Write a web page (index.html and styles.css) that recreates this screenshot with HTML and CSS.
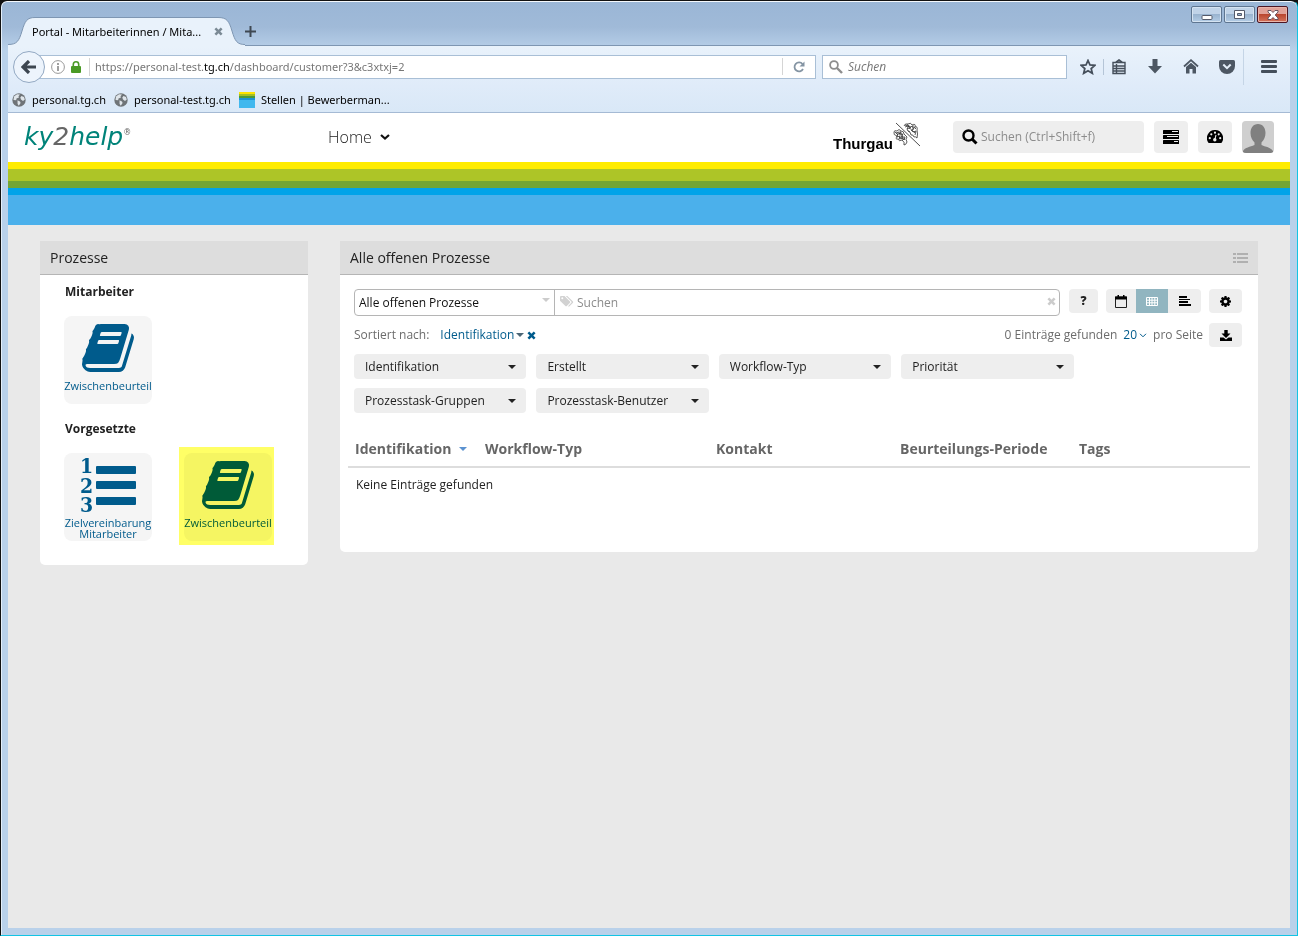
FILE: index.html
```html
<!DOCTYPE html>
<html lang="de">
<head>
<meta charset="utf-8">
<title>Portal - Mitarbeiterinnen / Mitarbeiter</title>
<link rel="stylesheet" href="styles.css">
</head>
<body>
<svg class="defs" aria-hidden="true">
  <symbol id="book" viewBox="0 0 1792 1792"><path d="M1703 478q40 57 18 129l-275 906q-19 64-76.5 107.5t-122.5 43.5h-923q-77 0-148.5-53.5t-99.5-131.5q-24-67-2-127 0-4 3-27t4-37q1-8-3-21.5t-3-19.5q2-11 8-21t16.5-23.5 16.5-23.5q23-38 45-91.5t30-91.5q3-10 .5-30t-.5-28q3-11 17-28t17-23q21-36 42-92t25-90q1-9-2.5-32t.5-28q4-13 22-30.5t22-22.5q19-26 42.5-84.5t27.5-96.5q1-8-3-25.5t-2-26.5q2-8 9-18t18-23 17-21q8-12 16.5-30.5t15-35 16-36 19.5-32 26.5-23.5 36-11.5 47.5 5.5l-1 3q38-9 51-9h761q74 0 114 56t18 130l-274 906q-36 119-71.5 153.5t-128.5 34.5h-869q-27 0-38 15-11 16-1 43 24 70 144 70h923q29 0 56-15.5t35-41.5l300-987q7-22 5-57 38 15 59 43zm-1064 2q-4 13 2 22.5t20 9.5h608q13 0 25.5-9.5t16.5-22.5l21-64q4-13-2-22.5t-20-9.5h-608q-13 0-25.5 9.5t-16.5 22.5zm-83 256q-4 13 2 22.5t20 9.5h608q13 0 25.5-9.5t16.5-22.5l21-64q4-13-2-22.5t-20-9.5h-608q-13 0-25.5 9.5t-16.5 22.5z"/></symbol>
  <symbol id="globe" viewBox="0 0 14 14"><circle cx="7" cy="7" r="6.7" fill="#6f7478"/><path d="M2 3.5 5 1.2 8 1.5 6.5 3.2 7 4.5 4.5 5.5 4.2 7.3 1.5 7zM9.5 3 12 4 12.8 6.5 11 8 9 6.5 8.3 4.5zM5.5 7.2 8 8.4 8.6 10 6.8 12.8 5.6 11z" fill="#dfe5ea"/></symbol>
  <symbol id="cross" viewBox="0 0 10 10"><path d="M2.5.5 5 3 7.500.5 9.500 2.500 7 5 9.500 7.500 7.500 9.500 5 7 2.500 9.500.5 7.500 3 5 .5 2.500z"/></symbol>
</svg>
<div class="window">
  <header class="titlebar">
    <div class="tab">
      <svg class="tab-shape" viewBox="0 0 237 29" aria-hidden="true"><path d="M0 27.500C9 27.500 11 24 14 14 17 4 19 .5 27 .5H210C219 .5 221 4 224 14 227 24 229 27.500 237 27.500V29H0z" fill="#e9f2fb"/><path d="M0 27.500C9 27.500 11 24 14 14 17 4 19 .5 27 .5H210C219 .5 221 4 224 14 227 24 229 27.500 237 27.500" fill="none" stroke="#7e96b2"/></svg>
      <span class="tab-title">Portal - Mitarbeiterinnen / Mita...</span>
      <button class="plain tab-close" aria-label="Tab schließen"><svg width="9" height="9" fill="#7b8a95"><use href="#cross"/></svg></button>
    </div>
    <button class="plain new-tab" aria-label="Neuer Tab"><svg width="11" height="11" stroke="#3f4852" stroke-width="2"><path d="M5.500 0V11M0 5.500H11"/></svg></button>
    <div class="win-controls">
      <button class="win-btn" aria-label="Minimieren"><svg width="12" height="10"><rect x="1" y="5.500" width="10" height="4" rx="1" fill="#fff" stroke="#555b6b"/></svg></button>
      <button class="win-btn" aria-label="Maximieren"><svg width="12" height="10"><path d="M.5.5H10.500V8.500H.5zM3.500 3.500V5.500H7.500V3.500z" fill="#fff" fill-rule="evenodd" stroke="#555b6b"/></svg></button>
      <button class="win-btn win-close" aria-label="Schließen"><svg width="12" height="10" viewBox="0 0 12 10"><path d="M1 .5H4L6 2.500 8 .5H11V2L8.200 5 11 8V9.500H8L6 7.500 4 9.500H1V8L3.800 5 1 2z" fill="#fff" stroke="#5b4a56" stroke-width=".9"/></svg></button>
    </div>
  </header>

  <div class="toolbar">
    <button class="back" aria-label="Zurück"><svg width="16" height="14" viewBox="0 0 16 14"><path d="M8 1 2 7 8 13M2.500 7H15" fill="none" stroke="#3d4650" stroke-width="3.200"/></svg></button>
    <div class="urlbar">
      <svg width="14" height="14" aria-hidden="true"><circle cx="7" cy="7" r="6.400" fill="none" stroke="#999"/><path d="M7 3V5M7 6V11" stroke="#888" stroke-width="1.600"/></svg>
      <svg width="10" height="12" aria-hidden="true"><path d="M2.300 6V3.500A2.700 2.700 0 0 1 7.700 3.500V6" fill="none" stroke="#4a9a25" stroke-width="1.600"/><rect y="5" width="10" height="7" rx="1" fill="#4a9a25"/></svg>
      <div class="url">https://personal-test.<b>tg.ch</b>/dashboard/customer?3&amp;c3xtxj=2</div>
      <button class="plain reload" aria-label="Neu laden"><svg width="12" height="12" viewBox="0 0 12 12"><path d="M9.500 3A4.500 4.500 0 1 0 10 8" fill="none" stroke="#8494a3" stroke-width="1.800"/><path d="M11.500.5V5.500H6.500z" fill="#8494a3"/></svg></button>
    </div>
    <label class="searchbar">
      <svg width="14" height="14" aria-hidden="true" fill="none" stroke="#8d8d8d"><circle cx="5" cy="5" r="3.900" stroke-width="1.800"/><path d="M8 8 13 13" stroke-width="2.400"/></svg>
      <input type="search" placeholder="Suchen" aria-label="Websuche">
    </label>
    <div class="tools">
      <button class="plain" aria-label="Lesezeichen"><svg width="16" height="16" viewBox="0 0 16 16"><path d="M8 1.500 10 6 14.800 6.400 11.200 9.600 12.300 14.300 8 11.800 3.700 14.300 4.800 9.600 1.200 6.400 6 6z" fill="none" stroke="#454f5b" stroke-width="1.800"/></svg></button>
      <i class="sep"></i>
      <button class="plain" aria-label="Leseliste"><svg width="14" height="16" viewBox="0 0 14 16"><path d="M1 3.500H13V14.500H1zM4 3 7 .8 10 3zM1 7H13M1 9.500H13M1 12H13M4.500 5V14" fill="none" stroke="#454f5b" stroke-width="1.400"/></svg></button>
      <button class="plain" aria-label="Downloads"><svg width="14" height="15" viewBox="0 0 14 15"><path d="M4.500 0H9.500V7H14L7 14.500 0 7H4.500z" fill="#4d5763"/></svg></button>
      <button class="plain" aria-label="Startseite"><svg width="16" height="15" viewBox="0 0 16 15"><path d="M1 7.500 8 1.200 15 7.500" fill="none" stroke="#4d5763" stroke-width="1.800"/><path d="M3 8 8 3.800 13 8V14.500H9.500V10H6.500V14.500H3z" fill="#4d5763"/></svg></button>
      <button class="plain" aria-label="Pocket"><svg width="16" height="14" viewBox="0 0 16 14"><path d="M1.500 0H14.500Q16 0 16 1.500V6A8 8 0 0 1 0 6V1.500Q0 0 1.500 0z" fill="#4d5763"/><path d="M4.300 4.500 8 8.200 11.700 4.500" fill="none" stroke="#e4eef8" stroke-width="2"/></svg></button>
      <i class="sep tall"></i>
      <button class="plain" aria-label="Menü"><svg width="16" height="13" fill="#454f5b"><rect width="16" height="3" rx="1"/><rect y="5" width="16" height="3" rx="1"/><rect y="10" width="16" height="3" rx="1"/></svg></button>
    </div>
  </div>

  <nav class="bookmarks">
    <a href="#"><svg width="14" height="14"><use href="#globe"/></svg>personal.tg.ch</a>
    <a href="#"><svg width="14" height="14"><use href="#globe"/></svg>personal-test.tg.ch</a>
    <a href="#"><svg width="16" height="16"><path fill="#41b8ee" d="M0 0H16V16H0z"/><path fill="#ffe200" d="M0 0H16V2H0z"/><path fill="#a5bf24" d="M0 2H16V4H0z"/><path fill="#4c9a3a" d="M0 4H16V6H0z"/><path fill="#1c94d6" d="M0 6H16V8H0z"/></svg>Stellen | Bewerberman...</a>
  </nav>

  <div class="page">
    <header class="app-header">
      <a class="logo" href="#">ky<span>2</span>help<sup>®</sup></a>
      <a class="home" href="#">Home <svg width="10" height="8" viewBox="0 0 10 8"><path d="M1 2 5 5.500 9 2" fill="none" stroke="#111" stroke-width="2.200"/></svg></a>
      <div class="thurgau">
        <b>Thurgau</b>
        <svg width="28" height="26" viewBox="0 0 28 26" fill="none" stroke="#333" stroke-width=".8" aria-hidden="true"><path d="M3 1 27 24" stroke="#222"/><path d="M11 4Q12 1 15 2 18 0 19 3 23 1 22 5 25 4 24 8 25 12 24 16 22 14 21 15 20 12 18 13 18 10 15 9M12 5 15 4 17 6 19 4 21 7 18 8 20 10 23 9 22 13M14 2 16 5M18 7 15 6 14 8 17 10M20 3 20 7M12 3 18 5M16 3 14 7M19 8 22 11M21 5 23 7"/><path d="M1 10Q1 8 4 9 6 6 8 9 11 9 11 12L14 15Q12 17 14 20 13 23 11 23 12 20 9 18 6 20 5 17 2 18 4 14 0 13 1 10M3 11 6 10 7 13 10 12 8 15 12 15 11 18M5 12 4 15 7 14 6 17 10 16 9 13M7 9 8 12M2 10 5 13M4 12 9 11M6 15 11 17M9 18 12 17"/></svg>
      </div>
      <div class="app-tools">
        <label class="app-search">
          <svg width="16" height="16" viewBox="0 0 16 16" fill="none" stroke="#000"><circle cx="6.500" cy="6.500" r="5" stroke-width="2.400"/><path d="M10 10 14.500 14.500" stroke-width="3"/></svg>
          <input type="search" placeholder="Suchen (Ctrl+Shift+f)" aria-label="Suchen">
        </label>
        <button class="tile" aria-label="Aufgaben"><svg width="16" height="14" viewBox="0 0 16 14"><rect width="16" height="4" rx=".5"/><rect y="5" width="16" height="4" rx=".5"/><rect y="10" width="16" height="4" rx=".5"/><path d="M9 1.500H15M4 6.500H15M11 11.500H15" stroke="#eee"/></svg></button>
        <button class="tile" aria-label="Dashboard"><svg width="16" height="13" viewBox="0 0 16 13"><path d="M8 0A8 8 0 0 1 14.700 12.500Q14.500 13 14 13H2Q1.500 13 1.300 12.500A8 8 0 0 1 8 0z"/><g fill="#eee"><circle cx="2.800" cy="8.200" r="1.100"/><circle cx="4.300" cy="4.300" r="1.100"/><circle cx="8" cy="2.700" r="1.100"/><circle cx="11.700" cy="4.300" r="1.100"/><circle cx="13.200" cy="8.200" r="1.100"/><circle cx="7.800" cy="9.800" r="1.700"/></g><path d="M7.800 9.800 9 5" stroke="#eee" stroke-width="1.100"/></svg></button>
        <button class="avatar" aria-label="Profil"><svg width="32" height="32" viewBox="0 0 32 32"><path fill="#cfcfcf" d="M0 0H32V32H0z"/><path fill="#808080" d="M16 3C21 3 23.500 7 23.500 12 23.500 16 22 19 19.500 21.500V24C24 26 29 26.500 31 30V32H1V30C3 26.500 8 26 12.500 24V21.500C10 19 8.500 16 8.500 12 8.500 7 11 3 16 3z"/></svg></button>
      </div>
    </header>
    <div class="stripes"></div>

    <main class="main">
      <section class="panel">
        <h2 class="panel-head">Prozesse</h2>
        <div class="processes">
          <h3>Mitarbeiter</h3>
          <div class="cards">
            <a class="card" href="#"><svg width="56" height="56"><use href="#book"/></svg><span>Zwischenbeurteil</span></a>
          </div>
          <h3>Vorgesetzte</h3>
          <div class="cards">
            <a class="card" href="#"><svg width="56" height="56" viewBox="0 0 56 56"><g class="digits"><text x="0" y="16">1</text><text x="0" y="36">2</text><text x="0" y="55">3</text></g><rect x="16" y="9" width="40" height="8" rx="1"/><rect x="16" y="24" width="40" height="8" rx="1"/><rect x="16" y="40" width="40" height="8" rx="1"/></svg><span>Zielvereinbarung Mitarbeiter</span></a>
            <a class="card marked" href="#"><svg width="56" height="56"><use href="#book"/></svg><span>Zwischenbeurteil</span></a>
          </div>
        </div>
      </section>

      <section class="panel">
        <h2 class="panel-head">Alle offenen Prozesse
          <svg width="15" height="10" fill="#b0b0b0"><path d="M0 0H3V2H0zM4 0H15V2H4zM0 4H3V6H0zM4 4H15V6H4zM0 8H3V10H0zM4 8H15V10H4z"/></svg>
        </h2>
        <div class="list">
          <div class="row">
            <div class="combo">
              <div class="pick view-pick"><select aria-label="Ansicht"><option>Alle offenen Prozesse</option></select></div>
              <label class="tag-search">
                <svg width="14" height="12" viewBox="0 0 14 12" fill="#d2d2d2"><path d="M0 1Q0 0 1 0H4.500L10 5.500Q10.500 6 10 6.700L6.800 10Q6 10.600 5.400 10L0 4.700zM1.300 2.300A1 1 0 1 0 3.300 2.300 1 1 0 1 0 1.300 2.300" fill-rule="evenodd"/><path d="M5.800 0H7.300L13 5.500Q13.500 6.200 13 6.800L9.500 10.200Q8.800 10.800 8 10.200L11.300 6.800Q12 6 11.300 5.400z"/></svg>
                <input type="text" placeholder="Suchen" aria-label="Prozesse suchen">
                <svg width="9" height="9" fill="#ccc"><use href="#cross"/></svg>
              </label>
            </div>
            <button class="btn help">?</button>
            <div class="views">
              <button class="btn" aria-label="Kalender"><svg width="12" height="13" viewBox="0 0 12 13"><path d="M.5 2H11.500V12.500H.5z" fill="none" stroke="#222"/><path d="M0 1.500H12V4.500H0zM2.500 0H4V2H2.500zM8 0H9.500V2H8z"/></svg></button>
              <button class="btn active" aria-label="Tabelle"><svg width="12" height="9" viewBox="0 0 12 9"><path d="M.5.5H11.500V8.500H.5zM.5 3.200H11.500M.5 5.800H11.500M3.500 0V9M6 0V9M8.800 0V9" fill="none" stroke="#fff"/></svg></button>
              <button class="btn" aria-label="Liste"><svg width="12" height="10"><path d="M0 0H8V2H0zM0 3H11V4H0zM0 5H9V7H0zM0 8H12V10H0z"/></svg></button>
            </div>
            <button class="btn gear" aria-label="Einstellungen"><svg width="11" height="11" viewBox="128 128 1536 1536"><path d="M1152 896q0-106-75-181t-181-75-181 75-75 181 75 181 181 75 181-75 75-181zm512-109v222q0 12-8 23t-20 13l-185 28q-19 54-39 91 35 50 107 138 10 12 10 25t-9 23q-27 37-99 108t-94 71q-12 0-26-9l-138-108q-44 23-91 38-16 136-29 186-7 28-36 28h-222q-14 0-24.500-8.500t-11.500-21.500l-28-184q-49-16-90-37l-141 107q-10 9-25 9-14 0-25-11-126-114-165-168-7-10-7-23 0-12 8-23 15-21 51-66.500t54-70.500q-27-50-41-99l-183-27q-13-2-21-12.500t-8-23.500v-222q0-12 8-23t19-13l186-28q14-46 39-92-40-57-107-138-10-12-10-24 0-10 9-23 26-36 98.500-107.500t94.500-71.500q13 0 26 10l138 107q44-23 91-38 16-136 29-186 7-28 36-28h222q14 0 24.500 8.500t11.500 21.500l28 184q49 16 90 37l142-107q9-9 24-9 13 0 25 10 129 119 165 170 7 8 7 22 0 12-8 23-15 21-51 66.500t-54 70.500q26 50 41 98l183 28q13 2 21 12.500t8 23.500z"/></svg></button>
          </div>
          <div class="row status">
            <span>Sortiert nach:</span>
            <div class="sort">
              <button class="plain link">Identifikation<i class="caret"></i></button>
              <button class="plain link" aria-label="Sortierung entfernen"><svg width="9" height="9" fill="#005b8c"><use href="#cross"/></svg></button>
            </div>
            <div class="count">
              <span>0 Einträge gefunden</span>
              <button class="plain link">20<svg width="8" height="5" viewBox="0 0 8 5"><path d="M1 .8 4 3.800 7 .8" fill="none" stroke="#005b8c"/></svg></button>
              <span>pro Seite</span>
            </div>
            <button class="btn gear" aria-label="Export"><svg width="12" height="11" viewBox="0 0 12 11"><path d="M4.300 0H7.700V3.500H10.500L6 8 1.500 3.500H4.300zM0 7.500H3.500L6 9.500 8.500 7.500H12V11H0z"/></svg></button>
          </div>
          <div class="filters">
            <div class="pick"><select aria-label="Identifikation"><option>Identifikation</option></select></div>
            <div class="pick"><select aria-label="Erstellt"><option>Erstellt</option></select></div>
            <div class="pick"><select aria-label="Workflow-Typ"><option>Workflow-Typ</option></select></div>
            <div class="pick"><select aria-label="Priorität"><option>Priorität</option></select></div>
            <div class="pick new-row"><select aria-label="Prozesstask-Gruppen"><option>Prozesstask-Gruppen</option></select></div>
            <div class="pick"><select aria-label="Prozesstask-Benutzer"><option>Prozesstask-Benutzer</option></select></div>
          </div>
          <table class="grid">
            <colgroup><col class="c1"><col class="c2"><col class="c3"><col class="c4"><col></colgroup>
            <thead><tr><th>Identifikation<i class="caret blue"></i></th><th>Workflow-Typ</th><th>Kontakt</th><th>Beurteilungs-Periode</th><th>Tags</th></tr></thead>
            <tbody><tr><td colspan="5">Keine Einträge gefunden</td></tr></tbody>
          </table>
        </div>
      </section>
    </main>
  </div>
</div>
</body>
</html>
```
FILE: styles.css
```css
* { box-sizing: border-box; }

body {
  margin: 0;
  font-family: "Open Sans", "Noto Sans", sans-serif;
  font-size: 13px;
  line-height: 18px;
  color: #222;
  background: #111;
}

svg { display: block; flex: none; }
a { color: inherit; text-decoration: none; }
button, input, select { font: inherit; color: inherit; margin: 0; }
h2, h3 { margin: 0; }
.defs { position: absolute; width: 0; height: 0; }

.plain {
  display: flex;
  align-items: center;
  justify-content: center;
  padding: 0;
  border: 0;
  background: none;
}

input {
  flex: 1;
  min-width: 0;
  padding: 0;
  border: 0;
  outline: 0;
  background: none;
}

/* Browser window */
.window {
  display: flex;
  flex-direction: column;
  min-height: 100vh;
  border: 1px solid #111;
  border-bottom-color: #12c4e4;
  border-right-color: #12c4e4;
  border-radius: 7px 7px 0 0;
  padding: 0 7px 7px;
  background: linear-gradient(#9ab6d6, #a0bad8 26px, #b9d1ea 50px);
  box-shadow: inset 0 1px #f4f8fc, inset 1px 0 #e4effa;
}

.titlebar {
  display: flex;
  align-items: flex-end;
  height: 45px;
  box-shadow: inset 0 -1px #7e96b2;
}

.tab {
  position: relative;
  display: flex;
  align-items: center;
  width: 237px;
  height: 29px;
  padding: 0 18px 0 24px;
  color: #000;
}
.tab-shape { position: absolute; left: 0; top: 0; }
.tab-title { position: relative; flex: 1; font-family: "Noto Sans", sans-serif; font-size: 11px; white-space: nowrap; }
.tab-close { position: relative; padding: 0 4px; }
.new-tab { height: 29px; }

.win-controls {
  display: flex;
  gap: 2px;
  align-self: flex-start;
  margin-left: auto;
  padding: 5px 2px 0 0;
}
.win-btn {
  display: flex;
  align-items: center;
  justify-content: center;
  width: 31px;
  height: 17px;
  padding: 0;
  border: 1px solid #5f7691;
  border-radius: 2px;
  background: linear-gradient(#c0d3e8 45%, #97b1cd 45%, #b4cde6);
  box-shadow: inset 0 0 0 1px #d5e3f1;
}
.win-close {
  border-color: #4c1523;
  background: linear-gradient(#e1a299 45%, #b7432c 45%, #d4735c);
  box-shadow: inset 0 0 0 1px #e9b5aa;
}

.toolbar {
  display: flex;
  align-items: center;
  height: 41px;
  padding: 0 3px 0 5px;
  background: linear-gradient(#e9f2fb, #dfebf9);
  font-size: 12px;
}
.back {
  position: relative;
  z-index: 1;
  display: flex;
  align-items: center;
  justify-content: center;
  width: 32px;
  height: 32px;
  margin-right: -6px;
  padding: 0;
  border: 1px solid #93a9c3;
  border-radius: 50%;
  background: #edf4fc;
}
.urlbar, .searchbar {
  display: flex;
  align-items: center;
  height: 24px;
  border: 1px solid #a9bfd6;
  background: #fff;
}
.urlbar { flex: 1; gap: 6px; padding-left: 11px; }
.url {
  flex: 1;
  margin-left: 2px;
  padding-left: 5px;
  border-left: 1px solid #d5d5d5;
  font-family: "Noto Sans", sans-serif;
  font-size: 11px;
  color: #777;
}
.url b { font-weight: 400; color: #000; }
.reload { width: 33px; height: 17px; border-left: 1px solid #d5d5d5; }
.searchbar { flex: 0 0 245px; gap: 5px; margin-left: 6px; padding-left: 6px; font-style: italic; }
.searchbar input::placeholder { color: #777; }
.tools { display: flex; align-items: center; margin-left: 3px; }
.tools .plain { width: 36px; height: 28px; }
.sep { width: 1px; height: 16px; margin: 0 -3px; background: #b5c5d7; }
.tall { height: 36px; margin: 0 7px 0 -2px; background: #c5d5e6; }

.bookmarks {
  display: flex;
  align-items: center;
  gap: 8px;
  height: 26px;
  padding-left: 4px;
  border-bottom: 1px solid #a5bad4;
  background: linear-gradient(#dfebf9, #d9e8f7);
  font-family: "Noto Sans", sans-serif;
  font-size: 11px;
  color: #000;
}
.bookmarks a { display: flex; align-items: center; gap: 6px; }

/* Application header */
.page { flex: 1; background: #e9e9e9; }
.app-header {
  display: flex;
  align-items: center;
  height: 49px;
  padding: 0 16px 2px;
  background: #fff;
}
.logo {
  width: 304px;
  font-family: "DejaVu Sans", sans-serif;
  font-size: 25px;
  font-style: italic;
  line-height: 28px;
  color: #008379;
}
.logo span { color: #666; }
.logo sup { font-size: 8px; line-height: 0; vertical-align: 10px; color: #666; font-style: normal; }
.home {
  display: flex;
  align-items: center;
  gap: 8px;
  font-size: 16px;
  font-weight: 300;
}
.thurgau { display: flex; align-items: center; margin-left: auto; color: #000; }
.thurgau b { padding-top: 14px; font: bold 15px/18px "Liberation Sans", Arial, sans-serif; padding-top: 14px; }
.thurgau svg { margin-bottom: 4px; }
.app-tools { display: flex; gap: 10px; margin-left: 32px; }
.app-search {
  display: flex;
  align-items: center;
  gap: 3px;
  width: 191px;
  height: 32px;
  padding: 0 9px;
  border-radius: 4px;
  background: #eee;
}
.app-search input { font-size: 12px; }
.app-search input::placeholder { color: #8c8c8c; }
.tile, .avatar {
  display: flex;
  align-items: center;
  justify-content: center;
  width: 34px;
  height: 32px;
  padding: 0;
  border: 0;
  border-radius: 4px;
  background: #eee;
  overflow: hidden;
}
.avatar { width: 32px; }

.stripes {
  height: 63px;
  background: linear-gradient(#ffec00 7px, #adc527 7px 19px, #72a536 19px 26px, #00a3e9 26px 33px, #4bb0eb 33px);
}

/* Panels */
.main {
  display: grid;
  grid-template-columns: 268px 1fr;
  gap: 32px;
  align-items: start;
  padding: 16px 32px;
}
.panel { border-radius: 0 0 5px 5px; background: #fff; }
.panel-head {
  display: flex;
  align-items: center;
  justify-content: space-between;
  height: 34px;
  padding: 0 10px;
  border-bottom: 1px solid #b5b5b5;
  background: #ddd;
  font-size: 14px;
  font-weight: 400;
}

.processes { padding: 8px 24px 24px; }
.processes h3 { padding-left: 1px; font-size: 12px; font-weight: 700; }
.cards { display: flex; gap: 32px; padding: 15px 0 16px; }
.processes .cards:last-child { padding-bottom: 0; }
.card {
  display: flex;
  flex-direction: column;
  align-items: center;
  width: 88px;
  height: 88px;
  padding-top: 4px;
  border-radius: 8px;
  background: #f5f5f5;
  fill: #005b8c;
  font-size: 11px;
  line-height: 11px;
  text-align: center;
  color: #005b8c;
}
.card svg { overflow: visible; }
.card span { margin-top: 4px; }
.digits { font: bold 21px "DejaVu Serif Condensed", "DejaVu Serif", serif; }
.marked { position: relative; }
.marked::after {
  content: "";
  position: absolute;
  inset: -6px -2px -4px -5px;
  background: #ff6;
  mix-blend-mode: multiply;
  pointer-events: none;
}

/* Process list */
.list { padding: 14px 8px 50px; }
.row { display: flex; align-items: flex-start; padding: 0 8px 0 6px; }
.combo {
  display: flex;
  flex: 1;
  height: 27px;
  border: 1px solid #b5b5b5;
  border-radius: 4px;
}
.pick { position: relative; }
.pick::after, .caret {
  content: "";
  border: 4px solid transparent;
  border-top-color: #222;
  border-bottom: 0;
}
.pick::after { position: absolute; right: 10px; top: 11px; pointer-events: none; }
.pick select {
  width: 100%;
  height: 25px;
  padding: 0 11px;
  border: 0;
  border-radius: 4px;
  appearance: none;
  background: #eee;
  font-size: 12px;
}
.view-pick { width: 200px; border-right: 1px solid #b5b5b5; }
.view-pick::after { right: 4px; top: 8px; border-top-color: #ccc; }
.view-pick select { padding: 0 4px; background: none; color: #111; }
.tag-search { display: flex; flex: 1; align-items: center; gap: 3px; padding: 0 3px 0 5px; font-size: 12px; }
.tag-search svg { margin-bottom: 2px; }
.tag-search input::placeholder { color: #8c8c8c; }

.btn {
  display: flex;
  align-items: center;
  justify-content: center;
  width: 33px;
  height: 24px;
  padding: 0;
  border: 0;
  border-radius: 4px;
  background: #eee;
}
.help { width: 29px; margin: 0 8px 0 9px; font-size: 12px; font-weight: 800; }
.views { display: flex; overflow: hidden; border-radius: 4px; }
.views .btn { border-radius: 0; }
.views .btn:first-child { width: 30px; }
.views .active { width: 32px; background: #91b5c0; }
.gear { margin-left: 8px; }

.status { align-items: center; margin-top: 7px; font-size: 12px; color: #6c6c6c; }
.sort { display: flex; gap: 3px; margin-left: 11px; }
.link { gap: 2px; color: #005b8c; }
.link .caret { border-top-color: #4b6575; }
.count { display: flex; gap: 6px; margin-left: auto; }
.status .gear { margin-left: 6px; }

.filters {
  display: grid;
  grid-template-columns: repeat(5, 1fr);
  gap: 9px 10px;
  padding-left: 6px;
  margin: 7px -6px 0 0;
}
.new-row { grid-column-start: 1; }

.grid {
  width: 100%;
  margin-top: 19px;
  border-collapse: collapse;
  table-layout: fixed;
}
.c1 { width: 130px; }
.c2 { width: 231px; }
.c3 { width: 184px; }
.c4 { width: 179px; }
.grid th {
  height: 35px;
  padding: 0 0 0 7px;
  border-bottom: 2px solid #ddd;
  font-size: 14px;
  text-align: left;
  white-space: nowrap;
  color: #666;
}
.grid td { height: 35px; padding: 0 8px; font-size: 12px; }
.grid .caret { display: inline-block; margin-left: 8px; vertical-align: 3px; }
.blue { border-top-color: #5b92d0; }
```
